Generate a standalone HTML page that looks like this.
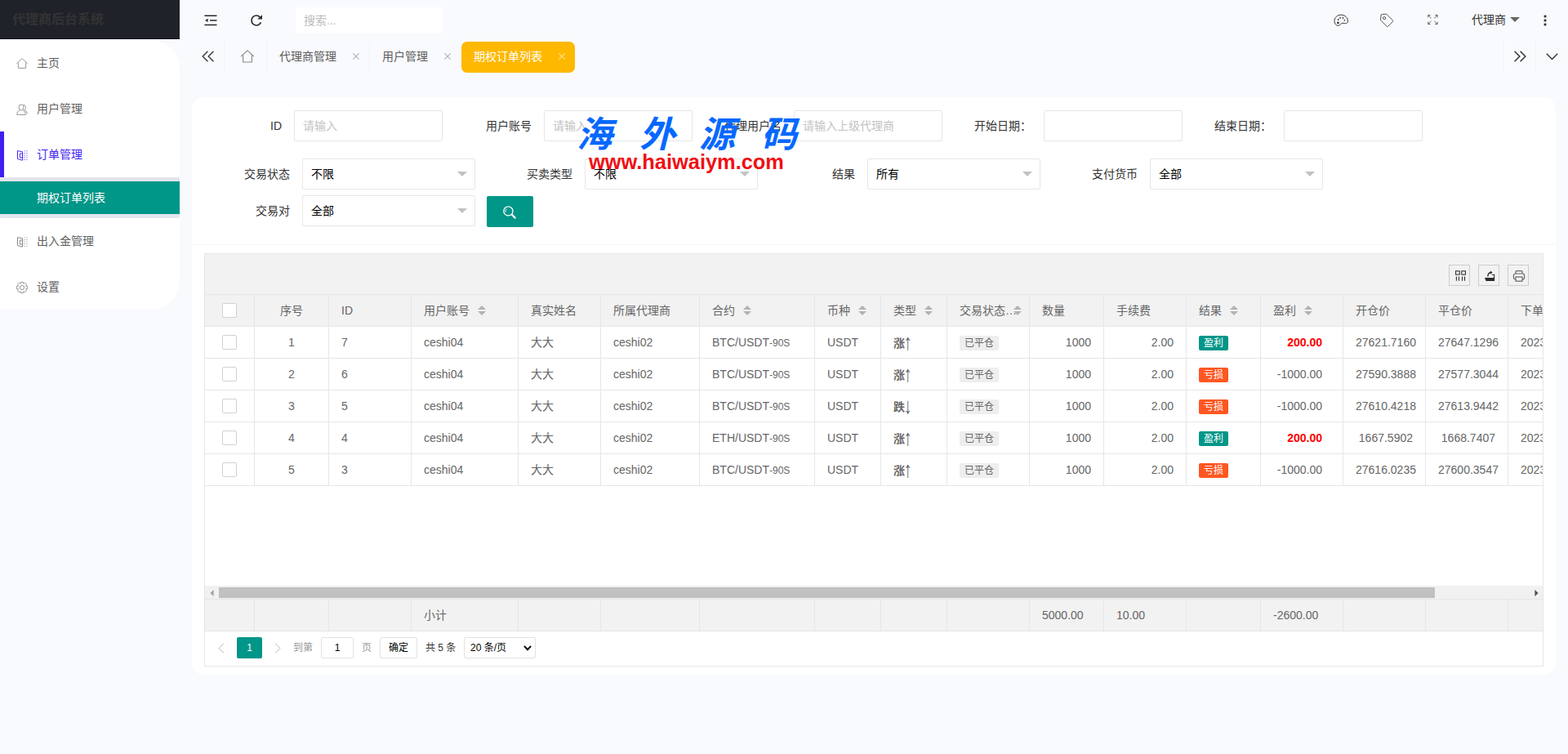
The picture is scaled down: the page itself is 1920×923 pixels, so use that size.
<!DOCTYPE html>
<html lang="zh-CN">
<head>
<meta charset="utf-8">
<title>代理商后台系统</title>
<style>
*{box-sizing:border-box;margin:0;padding:0}
html,body{width:1920px;height:923px;overflow:hidden}
body{position:relative;background:#f9fafe;font-family:"Liberation Sans","Noto Sans CJK SC",sans-serif;font-size:14px;color:#333;line-height:20px}
.abs{position:absolute}
svg{display:block;position:absolute;overflow:visible}
/* sidebar */
#logo{position:absolute;left:0;top:0;width:220px;height:48px;background:#20222a;border-bottom:1px solid #10121a;color:#333;font-size:16px;font-weight:bold;line-height:48px;padding-left:15px;white-space:nowrap;overflow:hidden}
#side{position:absolute;left:0;top:49px;width:220px;height:330px;background:#fff;border-radius:0 35px 35px 0;overflow:hidden}
#sidetop{position:absolute;left:0;top:48px;width:220px;height:1px;background:#fff}
.mi{position:absolute;left:0;width:220px;height:56px;line-height:56px;padding-left:45px;color:#5f5f5f;font-size:14px;white-space:nowrap}
.mi.on{color:#3f1ff0}
#bar{position:absolute;left:0;top:112px;width:5px;height:56px;background:#401ff0}
#sub{position:absolute;left:0;top:168px;width:220px;height:50px;background:#e4e6ed;border-radius:2px}
#subi{position:absolute;left:0;top:5px;width:220px;height:40px;background:#009688;color:#fff;line-height:40px;padding-left:45px;white-space:nowrap}

/* top bar */
#search{position:absolute;left:362px;top:9px;width:180px;height:32px;background:#fff;border-radius:3px;color:#bbb;font-size:14px;line-height:32px;padding-left:10px;white-space:nowrap}
#uname{position:absolute;left:1802px;top:14px;width:44px;line-height:20px;color:#333;white-space:nowrap}
/* tabs */
.vs{position:absolute;top:50px;width:1px;height:38px;background:#f3f3f7}
.tab{position:absolute;top:50px;height:38px;line-height:38px;color:#5c5c5c;white-space:nowrap}
.tx{position:absolute;top:50px;width:16px;height:38px;line-height:38px;text-align:center;color:#ccc;font-size:14px}
#atab{position:absolute;left:565px;top:51px;width:139px;height:38px;background:#ffb800;border-radius:7px;color:#fff;line-height:36px;padding-left:15px;white-space:nowrap}

/* card + form */
#card{position:absolute;left:235px;top:119px;width:1670px;height:707px;background:#fff;border-radius:15px}
#hr{position:absolute;left:235px;top:299px;width:1670px;height:1px;background:#f6f6f6}
.lb{position:absolute;width:110px;height:38px;line-height:38px;text-align:right;color:#333;white-space:nowrap}
.ip{position:absolute;height:38px;border:1px solid #e6e6e6;border-radius:2px;background:#fff;line-height:36px;padding-left:10px;color:#c2c2c2;white-space:nowrap;overflow:hidden}
.sl{position:absolute;width:212px;height:38px;border:1px solid #e6e6e6;border-radius:2px;background:#fff;line-height:36px;padding-left:10px;color:#000;white-space:nowrap}
.sl:after{content:"";position:absolute;right:9px;top:15px;border:6px solid transparent;border-top-color:#c2c2c2;border-bottom-width:0}
#sbtn{position:absolute;left:596px;top:240px;width:57px;height:38px;background:#009688;border-radius:2px}

/* table */
#tbl{position:absolute;left:250px;top:310px;width:1640px;height:506px;border:1px solid #e6e6e6;background:#fff;overflow:hidden}
#tool{position:absolute;left:0;top:0;width:1638px;height:50px;background:#f2f2f2;border-bottom:1px solid #e6e6e6}
.tb{position:absolute;top:13px;width:26px;height:26px;border:1px solid #ccc}
table{position:absolute;left:0;border-collapse:separate;border-spacing:0;table-layout:fixed;width:1763px}
th,td{height:39px;border-right:1px solid #e6e6e6;border-bottom:1px solid #e6e6e6;padding:0 15px;font-size:14px;font-weight:normal;color:#666;text-align:left;white-space:nowrap;overflow:hidden;line-height:28px;vertical-align:middle}
th{background:#f2f2f2;position:relative}
#thead{top:50px}#tbody{top:89px}#ttot{top:423px}
#ttot td{background:#f2f2f2}
.c{text-align:center}.r{text-align:right}
.cb{display:inline-block;vertical-align:middle;width:18px;height:18px;border:1px solid #d2d2d2;border-radius:2px;background:#fff;margin-top:-2px}
.st{display:inline-block;vertical-align:middle;position:relative;width:10px;height:20px;margin-left:10px;margin-top:-2px}
.st:before,.st:after{content:"";position:absolute;left:0;border:5px solid transparent}
.st:before{top:-1px;border-bottom-color:#b2b2b2}
.st:after{top:11px;border-top-color:#b2b2b2}
.bd{display:inline-block;vertical-align:middle;width:36px;height:18px;line-height:18px;text-align:center;font-size:12px;border-radius:2px;color:#fff;margin-top:-1px;overflow:hidden}
.bg{background:#eee;color:#666;width:48px}.bt{background:#009688}.bo{background:#ff5722}
.sm{font-size:12px}
b.red{color:#ff0000}
b{font-weight:bold}
.ty{position:relative;top:1px;display:inline-block;width:22px;height:20px;line-height:20px;vertical-align:middle;margin-top:-2px}
.ar{position:absolute;left:14px;top:0;font-style:normal;font-weight:normal;transform:translate(-1.5px,0.9px) scale(1.5,1.95);transform-origin:0 62%}
.cell{padding:0 15px;overflow:hidden;text-overflow:ellipsis;white-space:nowrap}
#sbar{position:absolute;left:0;top:406px;width:1638px;height:17px;background:#f1f1f1;border-bottom:1px solid #e6e6e6}
#thumb{position:absolute;left:17px;top:2px;width:1489px;height:13px;background:#c1c1c1}
/* page */
.pg{position:absolute;top:469px;height:26px;line-height:26px;font-size:12px;color:#333;white-space:nowrap}
#wmurl{position:absolute;left:721px;top:182px;width:242px;height:32px;line-height:32px;font-size:25.4px;font-weight:bold;color:#f00f14;white-space:nowrap;letter-spacing:0}
.hl{display:inline-block;vertical-align:top;white-space:nowrap}
</style>
</head>
<body>
<div id="logo">代理商后台系统</div>
<div id="sidetop"></div>
<div id="side">
  <div class="mi" style="top:0px">主页</div>
  <div class="mi" style="top:56px">用户管理</div>
  <svg style="left:20px;top:22px" width="14" height="13" viewBox="0 0 14 13"><path d="M0.4 6.6L7 0.6L13.6 6.6M2.4 5.4V12.4H11.6V5.4" fill="none" stroke="#999" stroke-width="1" stroke-linejoin="round"/></svg><svg style="left:20px;top:78px" width="14" height="14" viewBox="0 0 14 14"><g fill="none" stroke="#999" stroke-width="1"><path d="M8.6 1.4Q11.4 1.2 11.4 4.4Q11.4 6.6 10 7.6Q13.2 8.8 13.4 12.4"/><ellipse cx="6" cy="4.4" rx="3" ry="3.6"/><path d="M4.4 7.6Q0.8 8.8 0.6 13.4H11.6Q11.4 8.8 7.6 7.6"/></g></svg><svg style="left:21px;top:135px" width="13" height="13" viewBox="0 0 13 13"><g fill="none" stroke="#4a2af2" stroke-width="1"><path d="M0.5 0.6L6.6 1.8V12.2L0.5 10.6Z"/><path d="M3.4 4H6.4V9H3.4Z"/></g><g fill="#4a2af2"><rect x="8.6" y="0.4" width="1" height="1"/><rect x="8.6" y="3" width="1" height="1"/><rect x="8.6" y="5.6" width="1" height="1"/><rect x="8.6" y="8.2" width="1" height="1"/><rect x="8.6" y="10.8" width="1" height="1"/><rect x="11.4" y="0.4" width="1" height="1"/><rect x="11.4" y="3" width="1" height="1"/><rect x="11.4" y="5.6" width="1" height="1"/><rect x="11.4" y="8.2" width="1" height="1"/><rect x="11.4" y="10.8" width="1" height="1"/></g></svg><svg style="left:21px;top:241px" width="13" height="13" viewBox="0 0 13 13"><g fill="none" stroke="#888" stroke-width="1"><path d="M0.5 0.6L6.6 1.8V12.2L0.5 10.6Z"/><path d="M3.4 4H6.4V9H3.4Z"/></g><g fill="#888"><rect x="8.6" y="0.4" width="1" height="1"/><rect x="8.6" y="3" width="1" height="1"/><rect x="8.6" y="5.6" width="1" height="1"/><rect x="8.6" y="8.2" width="1" height="1"/><rect x="8.6" y="10.8" width="1" height="1"/><rect x="11.4" y="0.4" width="1" height="1"/><rect x="11.4" y="3" width="1" height="1"/><rect x="11.4" y="5.6" width="1" height="1"/><rect x="11.4" y="8.2" width="1" height="1"/><rect x="11.4" y="10.8" width="1" height="1"/></g></svg><svg style="left:20px;top:296px" width="14" height="14" viewBox="0 0 14 14"><g fill="none" stroke="#888" stroke-width="0.9" stroke-linejoin="round"><path d="M5.65 0.34L8.35 0.34L8.76 2.32L9.06 2.45L10.76 1.33L12.67 3.24L11.55 4.94L11.68 5.24L13.66 5.65L13.66 8.35L11.68 8.76L11.55 9.06L12.67 10.76L10.76 12.67L9.06 11.55L8.76 11.68L8.35 13.66L5.65 13.66L5.24 11.68L4.94 11.55L3.24 12.67L1.33 10.76L2.45 9.06L2.32 8.76L0.34 8.35L0.34 5.65L2.32 5.24L2.45 4.94L1.33 3.24L3.24 1.33L4.94 2.45L5.24 2.32Z"/><circle cx="7" cy="7" r="2.6"/></g></svg>
  <div id="bar"></div>
  <div class="mi on" style="top:112px">订单管理</div>
  <div id="sub"><div id="subi">期权订单列表</div></div>
  <div class="mi" style="top:218px">出入金管理</div>
  <div class="mi" style="top:274px">设置</div>
</div>

<!-- top bar -->
<svg style="left:250px;top:18px" width="16" height="14" viewBox="0 0 16 14"><g fill="none" stroke="#2a2a2a" stroke-width="1.5"><path d="M0.4 1.2H15.5M7 6.9H15.5M0.4 12.5H15.5"/></g><path d="M1 6.9L4.6 4.7V9.1Z" fill="#2a2a2a"/></svg>
<svg style="left:306px;top:17px" width="16" height="16" viewBox="0 0 16 16"><path d="M13.5 10.4A6 6 0 1 1 12.3 3.8" fill="none" stroke="#2a2a2a" stroke-width="1.7"/><path d="M15 1.2V6.6H9.2Z" fill="#2a2a2a"/></svg>
<div id="search">搜索...</div>
<svg style="left:1633px;top:17px" width="18" height="16" viewBox="0 0 18 16"><path d="M9.2 1.2C4.5 1.2 1 4.5 1 8.6C1 11.5 2.6 14.4 5.6 14.4C8.2 14.4 8.2 11.6 10.6 11.3C12.6 11.1 14 12 15.6 11.5C16.8 11.1 17.4 10.2 17.4 9C17.4 4.5 13.8 1.2 9.2 1.2Z" fill="none" stroke="#333" stroke-width="1"/><circle cx="5.4" cy="10.9" r="1.4" fill="#333"/><circle cx="5.7" cy="7" r=".9" fill="#333"/><circle cx="8" cy="4.9" r=".9" fill="#333"/><circle cx="11.5" cy="5" r=".9" fill="#333"/><circle cx="13.3" cy="7.8" r=".9" fill="#333"/></svg>
<svg style="left:1689px;top:16px" width="18" height="18" viewBox="0 0 18 18"><path d="M2.2 1.9L8.5 1L16.6 9.2Q17.1 9.7 16.6 10.2L10.4 16.5Q9.9 17 9.4 16.5L1.4 8.6Z" fill="none" stroke="#555" stroke-width="1" stroke-linejoin="round"/><circle cx="6.1" cy="6.2" r="1.6" fill="none" stroke="#555" stroke-width="1"/></svg>
<svg style="left:1747.6px;top:18.4px" width="12.8" height="12.1" viewBox="0 0 14 13"><g fill="none" stroke="#555" stroke-width="1"><path d="M0.8 3.6V0.5H3.9M1 0.7L5 4.7M10.1 0.5H13.2V3.6M13 0.7L9 4.7M0.8 9.4V12.5H3.9M1 12.3L5 8.3M10.1 12.5H13.2V9.4M13 12.3L9 8.3"/></g></svg>
<div id="uname">代理商</div>
<svg style="left:1849px;top:21px" width="12" height="6" viewBox="0 0 12 6"><path d="M0 0H12L6 6Z" fill="#666"/></svg>
<svg style="left:1890px;top:18px" width="4" height="14" viewBox="0 0 4 14"><g fill="#333"><rect x="0.6" y="0.6" width="2.8" height="2.8"/><rect x="0.6" y="5.6" width="2.8" height="2.8"/><rect x="0.6" y="10.6" width="2.8" height="2.8"/></g></svg>
<!-- tabs -->
<svg style="left:247px;top:62px" width="16" height="14" viewBox="0 0 16 14"><path d="M7.4 0.8L1.2 7L7.4 13.2M14.4 0.8L8.2 7L14.4 13.2" fill="none" stroke="#3a3a3a" stroke-width="1.4"/></svg>
<div class="vs" style="left:274px"></div><div class="vs" style="left:326px"></div><div class="vs" style="left:452px"></div>
<svg style="left:294px;top:61px" width="18" height="16" viewBox="0 0 18 16"><path d="M1 8.2L9 0.8L17 8.2M3.6 6.4V15H14.4V6.4" fill="none" stroke="#888" stroke-width="1.1" stroke-linejoin="round"/></svg>
<div class="tab" style="left:342px">代理商管理</div><svg style="left:432px;top:65px" width="8" height="8" viewBox="0 0 8 8"><path d="M0.3 0.3L7.7 7.7M7.7 0.3L0.3 7.7" stroke="#b4b4b8" stroke-width="1.2" fill="none"/></svg>
<div class="tab" style="left:468px">用户管理</div><svg style="left:544px;top:65px" width="8" height="8" viewBox="0 0 8 8"><path d="M0.3 0.3L7.7 7.7M7.7 0.3L0.3 7.7" stroke="#b4b4b8" stroke-width="1.2" fill="none"/></svg>
<div id="atab">期权订单列表</div><svg style="left:684px;top:65px" width="8" height="8" viewBox="0 0 8 8"><path d="M0.3 0.3L7.7 7.7M7.7 0.3L0.3 7.7" stroke="#ffe08c" stroke-width="1.2" fill="none"/></svg>
<div class="vs" style="left:1840px"></div><div class="vs" style="left:1880px"></div>
<svg style="left:1853px;top:62px" width="16" height="14" viewBox="0 0 16 14"><path d="M1.6 0.8L7.8 7L1.6 13.2M8.6 0.8L14.8 7L8.6 13.2" fill="none" stroke="#333" stroke-width="1.5"/></svg>
<svg style="left:1893px;top:65px" width="15" height="9" viewBox="0 0 15 9"><path d="M0.8 0.8L7.5 7.6L14.2 0.8" fill="none" stroke="#333" stroke-width="1.4"/></svg>

<div id="card"></div>
<div id="hr"></div>
<div class="lb" style="left:235px;top:135px">ID</div><div class="ip" style="left:360px;top:135px;width:182px">请输入</div>
<div class="lb" style="left:541px;top:135px">用户账号</div><div class="ip" style="left:666px;top:135px;width:182px">请输入</div>
<div class="lb" style="left:847px;top:135px">代理用户名</div><div class="ip" style="left:972px;top:135px;width:182px">请输入上级代理商</div>
<div class="lb" style="left:1153px;top:135px">开始日期：</div><div class="ip" style="left:1278px;top:135px;width:170px"></div>
<div class="lb" style="left:1447px;top:135px">结束日期：</div><div class="ip" style="left:1572px;top:135px;width:170px"></div>
<div class="lb" style="left:245px;top:194px">交易状态</div><div class="sl" style="left:370px;top:194px">不限</div>
<div class="lb" style="left:591px;top:194px">买卖类型</div><div class="sl" style="left:716px;top:194px">不限</div>
<div class="lb" style="left:937px;top:194px">结果</div><div class="sl" style="left:1062px;top:194px">所有</div>
<div class="lb" style="left:1283px;top:194px">支付货币</div><div class="sl" style="left:1408px;top:194px">全部</div>
<div class="lb" style="left:245px;top:239px">交易对</div><div class="sl" style="left:370px;top:239px">全部</div>
<div id="sbtn"><svg style="left:18.5px;top:11px" width="18" height="18" viewBox="0 0 18 18"><circle cx="7.4" cy="7.4" r="5.6" fill="none" stroke="#fff" stroke-width="1.3"/><path d="M4.2 8.6A3.4 3.4 0 0 1 5.6 4.6" fill="none" stroke="#fff" stroke-width="1"/><path d="M11.8 11.8L15.6 15.6" stroke="#fff" stroke-width="2.2" stroke-linecap="round"/></svg></div>

<div id="tbl">
<div id="tool">
<div class="tb" style="left:1523px"><svg style="left:5px;top:5px" width="16" height="16" viewBox="0 0 16 16"><g fill="none" stroke="#333" stroke-width="1.1"><rect x="2.55" y="1.8" width="4.65" height="4.3"/><rect x="9.8" y="1.8" width="4.65" height="4.3"/><path d="M3.4 8.4V13.8M6.4 8.4V13.8M10.5 8.4V13.8M13.5 8.4V13.8"/></g></svg></div>
<div class="tb" style="left:1559px"><svg style="left:5px;top:5px" width="16" height="16" viewBox="0 0 16 16"><path d="M1.9 10.1H14.1V14.1H3.6Z" fill="#2a2a2a"/><path d="M13.6 10.2V6.3H10.7" fill="none" stroke="#2a2a2a" stroke-width="1.1"/><path d="M5.2 8.6C5.2 5.4 6.8 3.2 8.8 2.8V1.4L11.6 3.6L8.8 5.8V4.4C7.4 4.8 6.6 6.2 6.6 8.6Z" fill="#2a2a2a"/></svg></div>
<div class="tb" style="left:1595px"><svg style="left:5px;top:5px" width="16" height="16" viewBox="0 0 16 16"><g fill="none" stroke="#666" stroke-width="1.2"><path d="M4 5V2.6Q4 1.6 5 1.6H11Q12 1.6 12 2.6V5"/><rect x="1.4" y="5" width="13.2" height="7" rx="2.2"/><rect x="4" y="9" width="8" height="5.2" fill="#f2f2f2"/></g></svg></div>
</div>
<table id="thead"><colgroup><col style="width:61px"><col style="width:91px"><col style="width:101px"><col style="width:131px"><col style="width:101px"><col style="width:121px"><col style="width:141px"><col style="width:81px"><col style="width:81px"><col style="width:101px"><col style="width:91px"><col style="width:101px"><col style="width:91px"><col style="width:101px"><col style="width:101px"><col style="width:101px"><col style="width:167px"></colgroup><tr><th class="c"><span class="cb"></span></th><th class="c">序号</th><th>ID</th><th><span class="hl" style="width:56px">用户账号</span><span class="st"></span></th><th>真实姓名</th><th>所属代理商</th><th><span class="hl" style="width:28px">合约</span><span class="st"></span></th><th><span class="hl" style="width:28px">币种</span><span class="st"></span></th><th><span class="hl" style="width:28px">类型</span><span class="st"></span></th><th style="padding:0"><div class="cell"><span class="hl" style="width:56px">交易状态</span><span class="st"></span></div></th><th>数量</th><th>手续费</th><th><span class="hl" style="width:28px">结果</span><span class="st"></span></th><th><span class="hl" style="width:28px">盈利</span><span class="st"></span></th><th>开仓价</th><th>平仓价</th><th>下单时间</th></tr></table>
<table id="tbody"><colgroup><col style="width:61px"><col style="width:91px"><col style="width:101px"><col style="width:131px"><col style="width:101px"><col style="width:121px"><col style="width:141px"><col style="width:81px"><col style="width:81px"><col style="width:101px"><col style="width:91px"><col style="width:101px"><col style="width:91px"><col style="width:101px"><col style="width:101px"><col style="width:101px"><col style="width:167px"></colgroup><tr><td class="c"><span class="cb"></span></td><td class="c">1</td><td>7</td><td>ceshi04</td><td>大大</td><td>ceshi02</td><td>BTC/USDT<span class="sm">-90S</span></td><td>USDT</td><td><b class="ty">涨<i class="ar">↑</i></b></td><td><span class="bd bg">已平仓</span></td><td class="r">1000</td><td class="r">2.00</td><td><span class="bd bt">盈利</span></td><td class="r" style="padding-right:25px"><b class="red">200.00</b></td><td class="r">27621.7160</td><td class="r">27647.1296</td><td>2023-05-22 17:28:09</td></tr><tr><td class="c"><span class="cb"></span></td><td class="c">2</td><td>6</td><td>ceshi04</td><td>大大</td><td>ceshi02</td><td>BTC/USDT<span class="sm">-90S</span></td><td>USDT</td><td><b class="ty">涨<i class="ar">↑</i></b></td><td><span class="bd bg">已平仓</span></td><td class="r">1000</td><td class="r">2.00</td><td><span class="bd bo">亏损</span></td><td class="r" style="padding-right:25px">-1000.00</td><td class="r">27590.3888</td><td class="r">27577.3044</td><td>2023-05-22 17:25:41</td></tr><tr><td class="c"><span class="cb"></span></td><td class="c">3</td><td>5</td><td>ceshi04</td><td>大大</td><td>ceshi02</td><td>BTC/USDT<span class="sm">-90S</span></td><td>USDT</td><td><b class="ty">跌<i class="ar">↓</i></b></td><td><span class="bd bg">已平仓</span></td><td class="r">1000</td><td class="r">2.00</td><td><span class="bd bo">亏损</span></td><td class="r" style="padding-right:25px">-1000.00</td><td class="r">27610.4218</td><td class="r">27613.9442</td><td>2023-05-22 17:22:16</td></tr><tr><td class="c"><span class="cb"></span></td><td class="c">4</td><td>4</td><td>ceshi04</td><td>大大</td><td>ceshi02</td><td>ETH/USDT<span class="sm">-90S</span></td><td>USDT</td><td><b class="ty">涨<i class="ar">↑</i></b></td><td><span class="bd bg">已平仓</span></td><td class="r">1000</td><td class="r">2.00</td><td><span class="bd bt">盈利</span></td><td class="r" style="padding-right:25px"><b class="red">200.00</b></td><td class="r">1667.5902</td><td class="r">1668.7407</td><td>2023-05-22 17:19:53</td></tr><tr><td class="c"><span class="cb"></span></td><td class="c">5</td><td>3</td><td>ceshi04</td><td>大大</td><td>ceshi02</td><td>BTC/USDT<span class="sm">-90S</span></td><td>USDT</td><td><b class="ty">涨<i class="ar">↑</i></b></td><td><span class="bd bg">已平仓</span></td><td class="r">1000</td><td class="r">2.00</td><td><span class="bd bo">亏损</span></td><td class="r" style="padding-right:25px">-1000.00</td><td class="r">27616.0235</td><td class="r">27600.3547</td><td>2023-05-22 17:16:30</td></tr></table>
<div id="sbar"><svg style="left:6px;top:5px" width="5" height="8" viewBox="0 0 5 8"><path d="M4.6 0V8L0.4 4Z" fill="#a3a3a3"/></svg><div id="thumb"></div><svg style="left:1628px;top:5px" width="5" height="8" viewBox="0 0 5 8"><path d="M0.4 0V8L4.6 4Z" fill="#505050"/></svg></div>
<table id="ttot"><colgroup><col style="width:61px"><col style="width:91px"><col style="width:101px"><col style="width:131px"><col style="width:101px"><col style="width:121px"><col style="width:141px"><col style="width:81px"><col style="width:81px"><col style="width:101px"><col style="width:91px"><col style="width:101px"><col style="width:91px"><col style="width:101px"><col style="width:101px"><col style="width:101px"><col style="width:167px"></colgroup><tr><td></td><td></td><td></td><td>小计</td><td></td><td></td><td></td><td></td><td></td><td></td><td>5000.00</td><td>10.00</td><td></td><td>-2600.00</td><td></td><td></td><td></td></tr></table>
<svg style="left:16px;top:476px" width="8" height="13" viewBox="0 0 8 13"><path d="M7 0.6L1 6.5L7 12.4" fill="none" stroke="#d2d2d2" stroke-width="1.2"/></svg>
<div class="pg" style="left:39px;width:31px;background:#009688;color:#fff;text-align:center;border-radius:2px">1</div>
<svg style="left:85px;top:476px" width="8" height="13" viewBox="0 0 8 13"><path d="M1 0.6L7 6.5L1 12.4" fill="none" stroke="#d2d2d2" stroke-width="1.2"/></svg>
<div class="pg" style="left:108px;color:#999">到第</div>
<div class="pg" style="left:142px;width:40px;border:1px solid #e2e2e2;border-radius:2px;text-align:center;line-height:24px;color:#000">1</div>
<div class="pg" style="left:192px;color:#999">页</div>
<div class="pg" style="left:214px;width:46px;border:1px solid #e2e2e2;border-radius:2px;text-align:center;line-height:24px;color:#000">确定</div>
<div class="pg" style="left:270px">共 5 条</div>
<div class="pg" style="left:317px;width:88px;border:1px solid #e2e2e2;border-radius:2px;line-height:24px;padding-left:7px;color:#000">20 条/页<svg style="left:72px;top:8.5px" width="10" height="7" viewBox="0 0 10 7"><path d="M0.9 0.9L5 5.2L9.1 0.9" fill="none" stroke="#000" stroke-width="2"/></svg></div>
</div>
<!--WM--><svg id="wm" style="left:690px;top:140px" width="310" height="50" viewBox="690 140 310 50"><text x="728 805 878 954" y="180" font-size="44" font-weight="bold" font-style="italic" fill="#0668ff" text-anchor="middle" font-family="&quot;Liberation Sans&quot;, &quot;Noto Sans CJK SC&quot;, sans-serif">海外源码</text></svg><div id="wmurl">www.haiwaiym.com</div><!--/WM-->
</body>
</html>
